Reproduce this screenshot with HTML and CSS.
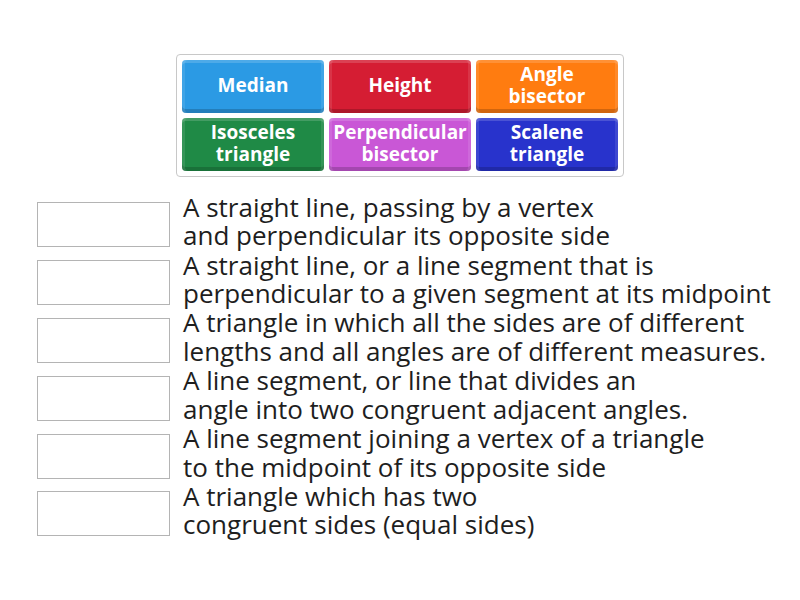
FILE: index.html
```html
<!DOCTYPE html>
<html>
<head>
<meta charset="utf-8">
<link rel="stylesheet" href="styles.css">
</head>
<body>
<div class="page">
  <div class="bank">
    <div class="tile blue">Median</div>
    <div class="tile red">Height</div>
    <div class="tile orange">Angle bisector</div>
    <div class="tile green">Isosceles triangle</div>
    <div class="tile purple">Perpendicular bisector</div>
    <div class="tile navy">Scalene triangle</div>
  </div>
  <div class="list">
    <div class="row"><div class="slot"></div><div class="text">A straight line, passing by a vertex<br>and perpendicular its opposite side</div></div>
    <div class="row"><div class="slot"></div><div class="text">A straight line, or a line segment that is<br>perpendicular to a given segment at its midpoint</div></div>
    <div class="row"><div class="slot"></div><div class="text">A triangle in which all the sides are of different<br>lengths and all angles are of different measures.</div></div>
    <div class="row"><div class="slot"></div><div class="text">A line segment, or line that divides an<br>angle into two congruent adjacent angles.</div></div>
    <div class="row"><div class="slot"></div><div class="text">A line segment joining a vertex of a triangle<br>to the midpoint of its opposite side</div></div>
    <div class="row"><div class="slot"></div><div class="text">A triangle which has two<br>congruent sides (equal sides)</div></div>
  </div>
</div>
</body>
</html>
```
FILE: styles.css
```css
html, body {
  margin: 0;
  padding: 0;
  background: #fff;
}
body {
  font-family: "Open Sans", "Liberation Sans", sans-serif;
  color: #1e1e1e;
}
.page {
  width: 800px;
  height: 600px;
  padding-top: 54px;
  box-sizing: border-box;
}
.bank {
  width: 448px;
  margin: 0 auto;
  box-sizing: border-box;
  border: 1px solid #c8c8c8;
  border-radius: 4px;
  padding: 5px;
  display: grid;
  grid-template-columns: 142px 142px 142px;
  grid-auto-rows: 53px;
  gap: 5px;
}
.tile {
  border-radius: 4px;
  color: #fff;
  font-weight: 700;
  font-size: 19px;
  line-height: 22px;
  text-align: center;
  display: flex;
  align-items: center;
  justify-content: center;
  padding: 0 4px 3px;
  box-sizing: border-box;
  box-shadow: inset 0 3px 0 rgba(255,255,255,0.16), inset 3px 0 0 rgba(255,255,255,0.1), inset -3px 0 0 rgba(255,255,255,0.1), inset 0 -4px 0 rgba(0,0,0,0.18);
}
.blue { background: #2b9ae4; }
.red { background: #d51d33; }
.orange { background: #ff7c10; }
.green { background: #1f8a46; }
.purple { background: #c957d6; }
.navy { background: #2833cc; }
.list {
  margin-top: 18px;
}
.row {
  height: 57.8px;
  display: flex;
  align-items: center;
  padding-left: 37px;
}
.slot {
  width: 133px;
  height: 45px;
  box-sizing: border-box;
  border: 1px solid #b4b4b4;
  flex: none;
  margin-top: 2px;
}
.text {
  margin-left: 13px;
  font-size: 26px;
  line-height: 28.5px;
  white-space: nowrap;
  margin-top: -5px;
}
```
